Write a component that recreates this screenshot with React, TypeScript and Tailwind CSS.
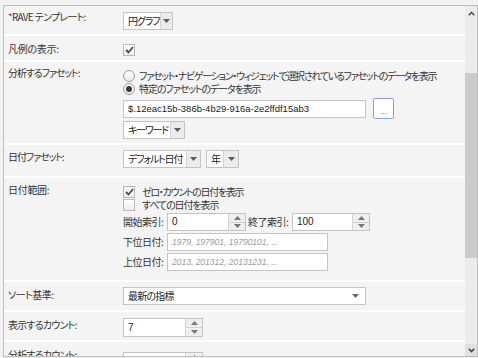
import React from "react";

const JP = "font-['Noto_Sans_CJK_JP',sans-serif] [font-feature-settings:'palt']";
const LAT = "font-['Liberation_Sans',Arial,sans-serif] tracking-normal";

function Tri({ up = false, color = "#5a5a5a" }: { up?: boolean; color?: string }) {
  return (
    <svg width="7" height="4" viewBox="0 0 7 4">
      <path d={up ? "M0 4 L3.5 0 L7 4Z" : "M0 0 L7 0 L3.5 4Z"} fill={color} />
    </svg>
  );
}

function Select({ text, w, aw = "w-[14px]", h = "h-[18px]" }: { text: string; w: string; aw?: string; h?: string }) {
  return (
    <div className={`flex border border-[#c4c4c4] bg-white ${w} ${h}`}>
      <div className="flex-1 pl-[4px] flex items-center whitespace-nowrap overflow-hidden text-[#222] tracking-[-1.2px] leading-[14px]">{text}</div>
      <div className={`${aw} border-l border-[#d4d4d4] bg-[#ebebeb] flex items-center justify-center shrink-0`}>
        <Tri />
      </div>
    </div>
  );
}

function Spin({ value, w, h = "h-[18px]" }: { value: string; w: string; h?: string }) {
  return (
    <div className={`flex border border-[#c4c4c4] bg-white shrink-0 ${w} ${h}`}>
      <div className={`flex-1 pl-[4px] flex items-center text-[10px] leading-[14px] text-[#222] ${LAT}`}>{value}</div>
      <div className="w-[17px] border-l border-[#d4d4d4] bg-[#efefef] flex flex-col">
        <div className="flex-1 flex items-center justify-center border-b border-[#d0d0d0]">
          <Tri up color="#777" />
        </div>
        <div className="flex-1 flex items-center justify-center">
          <Tri color="#777" />
        </div>
      </div>
    </div>
  );
}

function Check({ checked }: { checked: boolean }) {
  return (
    <div className="w-[12px] h-[12px] border border-[#b8b8b8] bg-gradient-to-b from-white to-[#ededed] flex items-center justify-center shrink-0">
      {checked && (
        <svg width="9" height="8" viewBox="0 0 9 8">
          <path d="M1 4 L3.5 6.5 L8 1" stroke="#4a4a4a" strokeWidth="1.8" fill="none" />
        </svg>
      )}
    </div>
  );
}

function Radio({ checked }: { checked: boolean }) {
  return (
    <div className="w-[12px] h-[12px] rounded-full border border-[#9c9c9c] bg-gradient-to-b from-[#fdfdfd] to-[#e9e9e9] flex items-center justify-center shrink-0">
      {checked && <div className="w-[6px] h-[6px] rounded-full bg-[#3a3a3a]" />}
    </div>
  );
}

function Row({
  label,
  h,
  lpt,
  cpt,
  lt = "",
  children,
}: {
  label: React.ReactNode;
  h: string;
  lpt: string;
  cpt: string;
  lt?: string;
  children?: React.ReactNode;
}) {
  return (
    <div className={`flex bg-[#f4f4f4] shrink-0 ${h}`}>
      <div className={`w-[119px] pl-[4px] shrink-0 whitespace-nowrap leading-[16px] ${lpt} ${lt}`}>{label}</div>
      <div className={`flex-1 ${cpt}`}>{children}</div>
    </div>
  );
}

function Input({ w, children }: { w: string; children: React.ReactNode }) {
  return <div className={`h-[18px] border border-[#c4c4c4] bg-white flex items-center pl-[4px] whitespace-nowrap overflow-hidden shrink-0 leading-[14px] ${w}`}>{children}</div>;
}

export default function App() {
  return (
    <div className={`w-[478px] h-[358px] bg-[#f2f2f2] pt-[5px] pl-[3px] overflow-hidden text-[10px] tracking-[-0.3px] text-[#333] ${JP}`}>
      <div className="w-[475px] h-[352px] border border-[#bcbcbc] bg-white flex overflow-hidden">
        <div className="flex-1 flex flex-col gap-[2px] overflow-hidden">
          <Row
            h="h-[28px]"
            lpt="pt-[3px]"
            cpt="pt-[6px]"
            lt="tracking-[-0.7px]"
            label={
              <>
                <span className="text-[#d42020]">*</span>RAVE テンプレート:
              </>
            }
          >
            <Select text="円グラフ" w="w-[50px]" aw="w-[12px]" />
          </Row>

          <Row h="h-[24px]" lpt="pt-[5px]" cpt="pt-[8px]" label="凡例の表示:">
            <Check checked />
          </Row>

          <Row h="h-[81px]" lpt="pt-[3px]" cpt="pt-[7px]" lt="tracking-[-1.1px]" label="分析するファセット:">
            <div className="h-[13px] flex items-center gap-[4px] whitespace-nowrap leading-[13px]">
              <Radio checked={false} />
              <span className="tracking-[-1.3px]">ファセット・ナビゲーション・ウィジェットで選択されているファセットのデータを表示</span>
            </div>
            <div className="h-[13px] flex items-center gap-[4px] whitespace-nowrap leading-[13px]">
              <Radio checked />
              <span className="tracking-[-1.1px]">特定のファセットのデータを表示</span>
            </div>
            <div className="mt-[3px] flex items-center gap-[7px]">
              <Input w="w-[243px]">
                <span className={`text-[9.5px] text-[#222] ${LAT}`}>$.12eac15b-386b-4b29-916a-2e2ffdf15ab3</span>
              </Input>
              <div className="w-[21px] h-[21px] rounded-[2px] border border-[#7ea6d6] bg-white flex items-end justify-center pb-[4px]">
                <span className={`text-[9px] leading-[6px] text-[#888] ${LAT}`}>...</span>
              </div>
            </div>
            <div className="mt-[2px]">
              <Select text="キーワード" w="w-[62px]" />
            </div>
          </Row>

          <Row h="h-[31px]" lpt="pt-[4px]" cpt="pt-[5px]" lt="tracking-[-1.1px]" label="日付ファセット:">
            <div className="flex gap-[5px]">
              <Select text="デフォルト日付" w="w-[78px]" />
              <Select text="年" w="w-[33px]" aw="w-[15px]" />
            </div>
          </Row>

          <Row h="h-[102px]" lpt="pt-[4px]" cpt="pt-[7px]" label="日付範囲:">
            <div className="h-[13px] flex items-center gap-[7px] whitespace-nowrap leading-[13px]">
              <Check checked />
              <span className="tracking-[-1.3px]">ゼロ・カウントの日付を表示</span>
            </div>
            <div className="h-[13px] flex items-center gap-[7px] whitespace-nowrap leading-[13px]">
              <Check checked={false} />
              <span className="tracking-[-1.1px]">すべての日付を表示</span>
            </div>
            <div className="mt-[2px] flex items-center leading-[14px]">
              <span className="w-[44px] shrink-0 whitespace-nowrap tracking-[-0.5px]">開始索引:</span>
              <Spin value="0" w="w-[79px]" />
              <span className="w-[44px] shrink-0 ml-[2px] whitespace-nowrap tracking-[-0.5px]">終了索引:</span>
              <Spin value="100" w="w-[78px]" />
            </div>
            <div className="mt-[2px] flex items-center leading-[14px]">
              <span className="w-[44px] shrink-0 whitespace-nowrap tracking-[-0.5px]">下位日付:</span>
              <Input w="w-[161px]">
                <span className={`italic text-[8.5px] text-[#9a9a9a] ${LAT}`}>1979, 197901, 19790101, ...</span>
              </Input>
            </div>
            <div className="mt-[2px] flex items-center leading-[14px]">
              <span className="w-[44px] shrink-0 whitespace-nowrap tracking-[-0.5px]">上位日付:</span>
              <Input w="w-[161px]">
                <span className={`italic text-[8.5px] text-[#9a9a9a] ${LAT}`}>2013, 201312, 20131231, ...</span>
              </Input>
            </div>
          </Row>

          <Row h="h-[28px]" lpt="pt-[5px]" cpt="pt-[5px]" lt="tracking-[-0.5px]" label="ソート基準:">
            <div className="w-[243px] h-[18px] border border-[#c4c4c4] bg-white flex items-center pl-[4px] pr-[6px] leading-[14px]">
              <span className="flex-1 text-[#222] tracking-[-0.8px]">最新の指標</span>
              <Tri color="#666" />
            </div>
          </Row>

          <Row h="h-[28px]" lpt="pt-[5px]" cpt="pt-[6px]" lt="tracking-[-0.8px]" label="表示するカウント:">
            <Spin value="7" w="w-[80px]" h="h-[19px]" />
          </Row>

          <Row h="h-[40px]" lpt="pt-[5px]" cpt="pt-[10px]" lt="tracking-[-0.8px]" label="分析するカウント:">
            <Spin value="50" w="w-[80px]" h="h-[19px]" />
          </Row>
        </div>

        <div className="w-[12px] bg-[#ececec] flex flex-col shrink-0">
          <div className="h-[67px] flex justify-center pt-[5px]">
            <svg width="7" height="5" viewBox="0 0 7 5">
              <path d="M0.8 4.2 L3.5 1.4 L6.2 4.2" stroke="#555" strokeWidth="1.6" fill="none" />
            </svg>
          </div>
          <div className="h-[185px] bg-[#cbcbcb]" />
          <div className="flex-1" />
          <div className="h-[12px] bg-[#e0e0e0] flex items-center justify-center">
            <svg width="7" height="5" viewBox="0 0 7 5">
              <path d="M0.8 0.8 L3.5 3.6 L6.2 0.8" stroke="#444" strokeWidth="1.6" fill="none" />
            </svg>
          </div>
        </div>
      </div>
    </div>
  );
}
